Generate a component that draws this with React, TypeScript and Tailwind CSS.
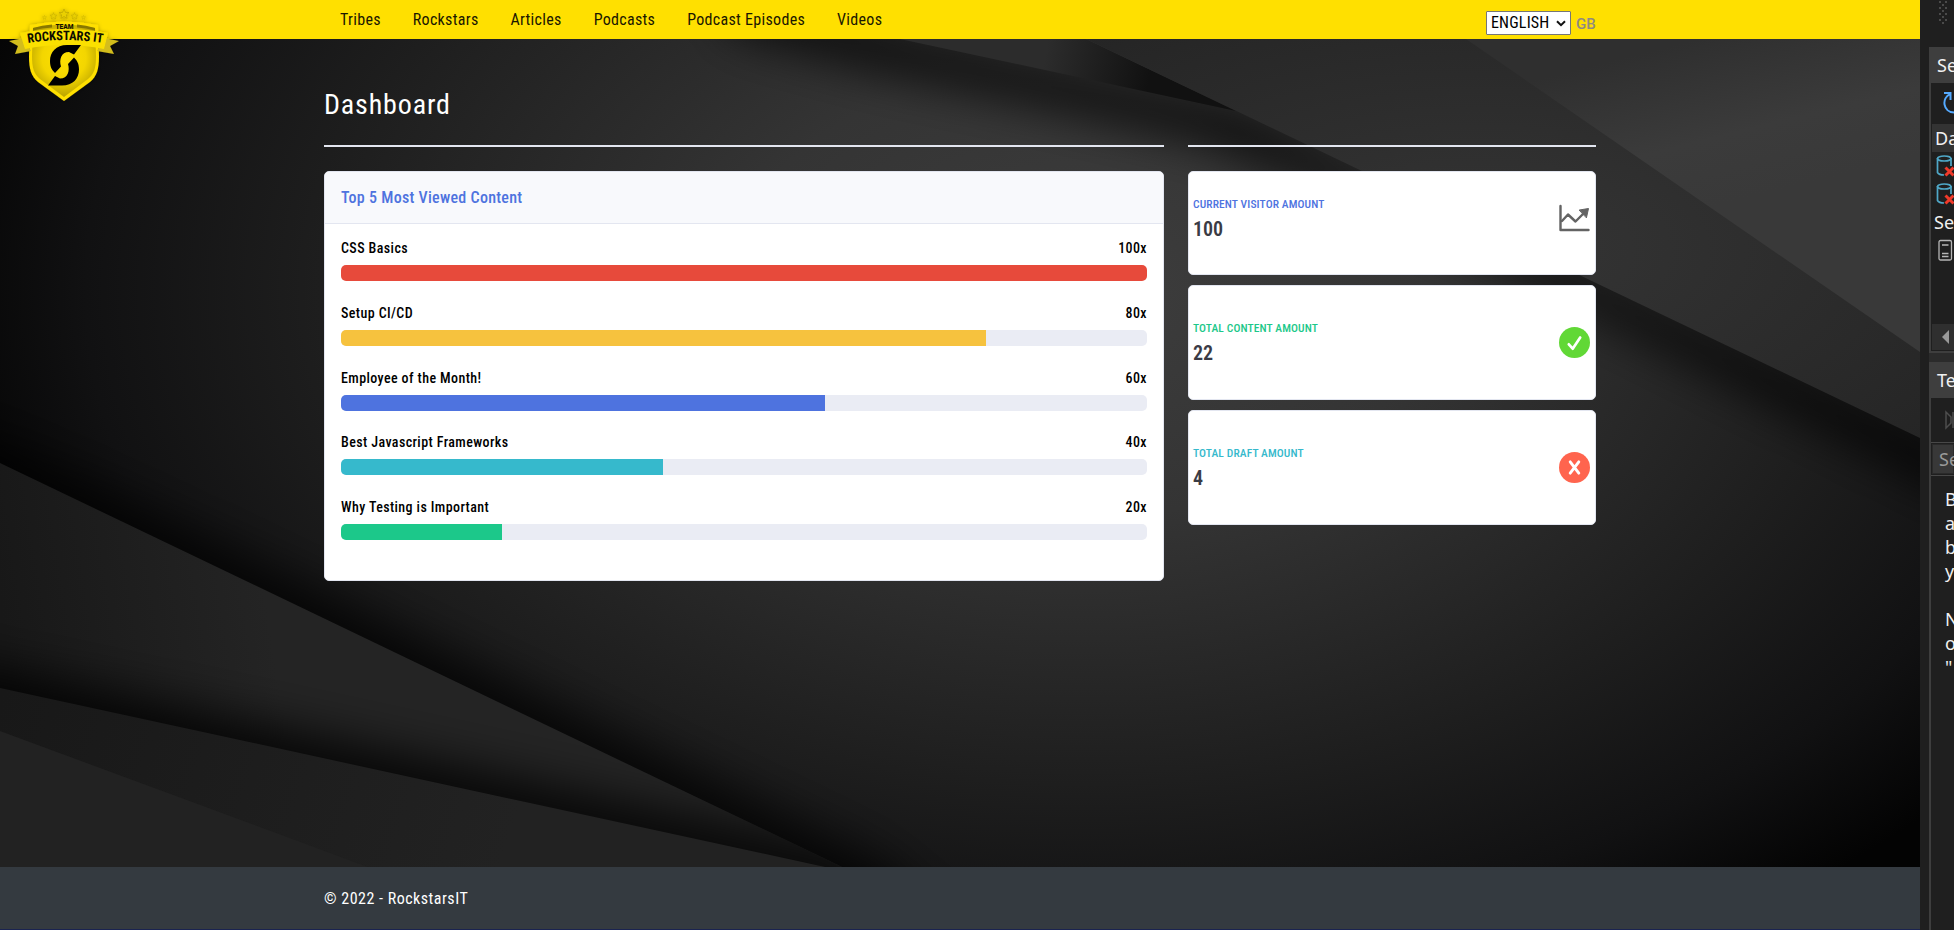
import React from "react";

const NAV = ["Tribes", "Rockstars", "Articles", "Podcasts", "Podcast Episodes", "Videos"];

const CONTENT = [
  { title: "CSS Basics", views: 100, color: "bg-[#e74a3b]" },
  { title: "Setup CI/CD", views: 80, color: "bg-[#f6c23e]" },
  { title: "Employee of the Month!", views: 60, color: "bg-[#4e73df]" },
  { title: "Best Javascript Frameworks", views: 40, color: "bg-[#36b9cc]" },
  { title: "Why Testing is Important", views: 20, color: "bg-[#1cc88a]" },
];

function Backdrop() {
  return (
    <svg className="absolute inset-0 h-full w-full" viewBox="0 39 1920 828" preserveAspectRatio="none" aria-hidden="true">
      <defs>
        <radialGradient id="base" gradientUnits="userSpaceOnUse" cx="0" cy="0" r="1" gradientTransform="translate(1080 290) scale(1170 760)">
          <stop offset="0" stopColor="#3d3d3d" />
          <stop offset="0.3" stopColor="#343434" />
          <stop offset="0.65" stopColor="#1e1e1e" />
          <stop offset="0.85" stopColor="#111112" />
          <stop offset="1" stopColor="#030303" />
        </radialGradient>
        <radialGradient id="upper" gradientUnits="userSpaceOnUse" cx="0" cy="0" r="1" gradientTransform="translate(1480 250) scale(640 300)">
          <stop offset="0" stopColor="#353535" />
          <stop offset="1" stopColor="#242424" />
        </radialGradient>
        <linearGradient id="corner" gradientUnits="userSpaceOnUse" x1="1700" y1="39" x2="1740" y2="200">
          <stop offset="0" stopColor="#2f2f2f" />
          <stop offset="0.6" stopColor="#3b3b3b" />
          <stop offset="1" stopColor="#393939" />
        </linearGradient>
        <linearGradient id="wedge" gradientUnits="userSpaceOnUse" x1="960" y1="39" x2="1150" y2="75">
          <stop offset="0" stopColor="#2c2c2c" />
          <stop offset="0.45" stopColor="#2c2c2c" />
          <stop offset="1" stopColor="#111111" />
        </linearGradient>
        <linearGradient id="left" gradientUnits="userSpaceOnUse" x1="0" y1="600" x2="260" y2="560">
          <stop offset="0" stopColor="#181818" />
          <stop offset="1" stopColor="#242424" />
        </linearGradient>
        <linearGradient id="low" gradientUnits="userSpaceOnUse" x1="0" y1="700" x2="500" y2="867">
          <stop offset="0" stopColor="#181818" />
          <stop offset="0.4" stopColor="#1c1c1c" />
          <stop offset="1" stopColor="#222222" />
        </linearGradient>
        <filter id="soft" filterUnits="userSpaceOnUse" x="-200" y="-200" width="2400" height="1400">
          <feGaussianBlur stdDeviation="24" />
        </filter>
        <clipPath id="leftClip">
          <path d="M0 463L842 867H0Z" />
        </clipPath>
      </defs>
      <rect x="0" y="39" width="1920" height="828" fill="url(#base)" />
      <path d="M700 -20L900 39L1236 111L1400 189L1990 472L1990 510L1400 212L1200 136L1030 98L880 66L740 28Z" fill="#000" fillOpacity="0.95" filter="url(#soft)" />
      <path d="M900 39L1236 111L1086 39Z" fill="url(#wedge)" />
      <path d="M1086 39L1920 438V39Z" fill="url(#upper)" />
      <path d="M1466 39L1920 352V39Z" fill="url(#corner)" />
      <path d="M-60 410L0 438L880 862L960 930L840 930L-60 500Z" fill="#000" fillOpacity="0.75" filter="url(#soft)" />
      <path d="M0 463L842 867H0Z" fill="url(#left)" />
      <g clipPath="url(#leftClip)">
        <path d="M-60 652L0 668L870 856V910L-60 730Z" fill="#000" fillOpacity="0.85" filter="url(#soft)" />
      </g>
      <path d="M0 688L825 867H0Z" fill="url(#low)" />
      <path d="M0 731L368 867H0Z" fill="#222222" />
    </svg>
  );
}

function Logo() {
  return (
    <svg className="absolute top-0 left-0 z-10 h-[120px] w-[140px]" viewBox="0 0 140 120" role="img" aria-label="Team Rockstars IT">
      <defs>
        <radialGradient id="shield" gradientUnits="userSpaceOnUse" cx="64" cy="58" r="44">
          <stop offset="0" stopColor="#ffe100" />
          <stop offset="0.5" stopColor="#f3d600" />
          <stop offset="1" stopColor="#a89300" />
        </radialGradient>
        <filter id="glow" x="-30%" y="-30%" width="160%" height="160%">
          <feDropShadow dx="0" dy="0.5" stdDeviation="2" floodColor="#000" floodOpacity="0.35" />
        </filter>
        <path id="arc" d="M26 43.500Q65 36.500 106 43.500" />
        <path id="star" d="M0 -5L1.500 -1.600L5 -1.400L2.300 0.900L3.200 4.500L0 2.500L-3.200 4.500L-2.300 0.900L-5 -1.400L-1.500 -1.600Z" />
        <path id="hook" d="M81 45H67C56 45 50 52 50 61C50 67 52 70 55 73L61 66.500C59 60 61 52 69 52L74 54.500Z" />
      </defs>
      <g filter="url(#glow)">
        <g fill="#ead000" stroke="#b39e00" strokeWidth="0.6">
          <use href="#star" transform="translate(64 14)" />
          <use href="#star" transform="translate(53.500 16) scale(.68)" />
          <use href="#star" transform="translate(74.500 16) scale(.68)" />
          <use href="#star" transform="translate(44.500 17.500) scale(.45)" />
          <use href="#star" transform="translate(83.500 17.500) scale(.45)" />
        </g>
        <path d="M30 25Q64 18 98 25L99 56C99 69 97 76 90 82L64 101L38 82C31 76 29 69 29 56Z" fill="#ffe000" />
        <path d="M33 28Q64 21 95 28L96 56C96 68 94 74 88 79L64 97L40 79C34 74 32 68 32 56Z" fill="url(#shield)" />
        <path d="M33 28Q42 25 52 24.500V27.500Q42 28 33 30.500ZM95 28Q86 25 77 24.500V27.500Q86 28 95 30.500Z" fill="#877705" />
        <path d="M24 38L9 41L18 46L15 54L31 51ZM104 38L119 41L110 46L114 54L97 51Z" fill="#d3bd1b" />
        <path d="M20 33Q64 25 108 33L104 49Q64 41 25 49Z" fill="#fbe005" />
      </g>
      <g fill="#000">
        <use href="#hook" />
        <use href="#hook" transform="rotate(180 64.500 65.300)" />
      </g>
      <text x="64.500" y="28.500" textAnchor="middle" textLength="18" lengthAdjust="spacingAndGlyphs" className="fill-[#151300] font-[Roboto] text-[7.500px] font-extrabold">TEAM</text>
      <text className="fill-[#0c0b00] font-[Roboto] text-[13px] font-bold [font-stretch:75%]">
        <textPath href="#arc" startOffset="2" textLength="75" lengthAdjust="spacingAndGlyphs">ROCKSTARS IT</textPath>
      </text>
    </svg>
  );
}

function ChartIcon() {
  return (
    <svg className="h-[28px] w-[31px]" viewBox="0 0 31 28" fill="none" stroke="#636363" strokeWidth="2.400" strokeLinecap="round" strokeLinejoin="round">
      <path d="M1.500 2V26H29.500" />
      <path d="M3 17L9 10.500L16.500 17.500L24 10" />
      <path d="M20.500 6L29.500 4.500L27.500 13.500Z" fill="#636363" strokeWidth="1" />
    </svg>
  );
}

function CheckIcon() {
  return (
    <svg className="h-[31px] w-[31px]" viewBox="0 0 31 31" fill="none">
      <circle cx="15.500" cy="15.500" r="15.500" fill="#61d836" />
      <path d="M9.800 17.300L13.700 21.700L21.200 10.500" stroke="#fff" strokeWidth="2.700" strokeLinecap="round" strokeLinejoin="round" />
    </svg>
  );
}

function CrossIcon() {
  return (
    <svg className="h-[31px] w-[31px]" viewBox="0 0 31 31" fill="none">
      <circle cx="15.500" cy="15.500" r="15.500" fill="#ff644e" />
      <path d="M11.200 9.800L19.800 21.200M19.800 9.800L11.200 21.200" stroke="#fff" strokeWidth="2.900" strokeLinecap="round" />
    </svg>
  );
}

type StatProps = { label: string; value: string; tone: string; size: string; children: React.ReactNode };

function StatCard({ label, value, tone, size, children }: StatProps) {
  return (
    <div className={"flex items-center justify-between rounded-[5px] border border-[#e3e6f0] bg-white pr-[5px] pl-1 " + size}>
      <div>
        <div className={"mb-1 text-[11.500px] leading-[17px] font-medium tracking-[0.12px] [font-stretch:75%] " + tone}>{label}</div>
        <div className="text-[20px] leading-6 font-semibold text-[#3a3b45] [font-stretch:75%]">{value}</div>
      </div>
      {children}
    </div>
  );
}

function DatabaseIcon() {
  return (
    <svg className="h-7 w-[18px] shrink-0" viewBox="0 0 18 28" fill="none">
      <path d="M1.500 6V20.500Q3 23 8 23M15 6V14" stroke="#4fa8c8" strokeWidth="1.700" />
      <ellipse cx="8.200" cy="6.500" rx="6.700" ry="2.500" stroke="#4fa8c8" strokeWidth="1.700" />
      <path d="M9.500 15.500L17.500 23.500M17.500 15.500L9.500 23.500" stroke="#f03a2a" strokeWidth="3" />
    </svg>
  );
}

function SidePanel() {
  return (
    <aside className="flex h-[930px] w-[34px] shrink-0 flex-col overflow-hidden bg-[#1f1f1f] pl-[9px] font-['Noto_Sans'] text-[18px] whitespace-nowrap text-[#f0f0f0]">
      <svg className="h-[47px] w-[25px] shrink-0" viewBox="0 0 25 47" fill="#4a4a4a">
        {[1, 7, 13, 19].map((y) => (
          <path key={y} d={`M10 ${y}h2v2h-2zM16 ${y}h2v2h-2zM13 ${y + 3}h2v2h-2z`} />
        ))}
      </svg>
      <div className="h-9 shrink-0 bg-[#3e3e3e] pl-2 leading-[37px]">Se</div>
      <div className="h-[270px] shrink-0 border-b-2 border-l-2 border-[#3e3e3e]">
        <svg className="h-[41px] w-[23px]" viewBox="0 0 23 41" fill="none" stroke="#55aaff" strokeWidth="2">
          <path d="M13 10H19.500V17M19.500 11C10 15 12 29 23 29.500" />
        </svg>
        <div className="ml-px h-7 bg-[#333333] pl-[3px] leading-7">Da</div>
        <div className="flex h-7 pl-[5px]"><DatabaseIcon /></div>
        <div className="flex h-7 pl-[5px]"><DatabaseIcon /></div>
        <div className="h-7 pl-[3px] leading-7">Se</div>
        <svg className="h-7 w-[23px]" viewBox="0 0 23 28" fill="none" stroke="#b5b5b5" strokeWidth="1.300">
          <rect x="8" y="4.500" width="12.500" height="19.500" rx="1.500" />
          <path d="M11 9h6.500M11 17.500h6.500M11 20.500h6.500" />
        </svg>
        <div className="mt-[60px] ml-px flex h-[26px] items-center bg-[#2f2f2f] pl-[10px]">
          <svg className="h-[14px] w-[7px]" viewBox="0 0 7 14" fill="#999999"><path d="M7 0V14L0 7Z" /></svg>
        </div>
      </div>
      <div className="h-[9px] shrink-0 bg-[#2b2b2b]" />
      <div className="h-9 shrink-0 bg-[#3e3e3e] pl-2 leading-9">Te</div>
      <div className="flex-1 border-l-2 border-[#3e3e3e]">
        <svg className="h-11 w-[23px]" viewBox="0 0 23 44" fill="none" stroke="#4d4d4d" strokeWidth="1.500">
          <path d="M15 14V30L20 25V19Z M22 14V30" />
        </svg>
        <div className="h-[34px] border-y border-[#484848] py-px pl-px">
          <div className="h-[30px] border border-[#2a2a2a] bg-[#383838] pl-[6px] leading-7 text-[#9a9a9a]">Se</div>
        </div>
        <div className="pt-[11px] pl-[14px] leading-6">
          <div>B</div>
          <div>a</div>
          <div>b</div>
          <div>y</div>
          <div className="h-6" />
          <div>N</div>
          <div>o</div>
          <div>"</div>
        </div>
      </div>
    </aside>
  );
}

export default function App() {
  return (
    <div className="flex h-[930px] w-[1954px] overflow-hidden bg-[#1f1f1f] font-[Roboto,sans-serif] antialiased">
      <div className="relative flex w-[1920px] shrink-0 flex-col">
        <header className="flex h-[39px] shrink-0 justify-between bg-[#ffe000] pr-[324px] pl-[324px]">
          <Logo />
          <nav className="flex">
            {NAV.map((item) => (
              <a key={item} className="px-4 text-[16px] leading-[40px] tracking-[0.3px] text-[#1a1700] [font-stretch:75%]">{item}</a>
            ))}
          </nav>
          <div className="flex items-start gap-[5px] pt-[11px]">
            <button className="flex h-6 w-[85px] items-center justify-between rounded-[1px] border border-[#767676] bg-white pr-1 pl-1 text-[16px] leading-6 tracking-[0.2px] text-black [font-stretch:75%]">
              ENGLISH
              <svg className="h-[7px] w-[10px]" viewBox="0 0 10 7" fill="none" stroke="#111" strokeWidth="2"><path d="M1 1.200L5 5.200L9 1.200" /></svg>
            </button>
            <span className="text-[15px] leading-[27px] font-medium tracking-[0.2px] text-[#8f8a80] [font-stretch:90%]">GB</span>
          </div>
        </header>

        <main className="relative h-[828px] shrink-0">
          <Backdrop />
          <div className="relative px-[324px] pt-[45px]">
            <h1 className="h-[61px] text-[28px] leading-[42px] tracking-[0.85px] text-white [font-stretch:75%]">Dashboard</h1>
            <div className="flex items-start gap-6">
              <section className="w-[840px]">
                <hr className="mb-6 border-0 border-t-2 border-[#e3e6f0]" />
                <div className="h-[410px] rounded-[5px] border border-[#e3e6f0] bg-white">
                  <h2 className="h-[52px] rounded-t-[4px] border-b border-[#e3e6f0] bg-[#f8f9fc] px-4 text-[16px] leading-[52px] font-medium tracking-[0.28px] text-[#4e73df] [font-stretch:75%]">Top 5 Most Viewed Content</h2>
                  <div className="px-4 pt-3">
                    {CONTENT.map((c) => (
                      <div key={c.title} className="mb-[20.8px]">
                        <div className="mb-[5px] flex justify-between text-[14px] leading-6 font-medium tracking-[0.4px] text-black [font-stretch:75%]">
                          <span>{c.title}</span>
                          <span>{c.views}x</span>
                        </div>
                        <div className="-mb-px h-4 overflow-hidden rounded-[5px] bg-[#eaecf4]">
                          <div className={"h-4 " + c.color} style={{ width: `${c.views}%` }} />
                        </div>
                      </div>
                    ))}
                  </div>
                </div>
              </section>
              <section className="flex w-[408px] flex-col">
                <hr className="mb-6 border-0 border-t-2 border-[#e3e6f0]" />
                <div className="flex flex-col gap-[10px]">
                  <StatCard label="CURRENT VISITOR AMOUNT" value="100" tone="text-[#4e73df]" size="h-[104px] pb-[10px]"><ChartIcon /></StatCard>
                  <StatCard label="TOTAL CONTENT AMOUNT" value="22" tone="text-[#1cc88a]" size="h-[115px]"><CheckIcon /></StatCard>
                  <StatCard label="TOTAL DRAFT AMOUNT" value="4" tone="text-[#36b9cc]" size="h-[115px]"><CrossIcon /></StatCard>
                </div>
              </section>
            </div>
          </div>
        </main>

        <footer className="h-[62px] shrink-0 bg-[#343a40] px-[324px] text-[16px] leading-[63px] tracking-[0.5px] text-white [font-stretch:75%]">© 2022 - RockstarsIT</footer>
        <div className="h-px shrink-0 bg-[#1a2350]" />
      </div>
      <SidePanel />
    </div>
  );
}
